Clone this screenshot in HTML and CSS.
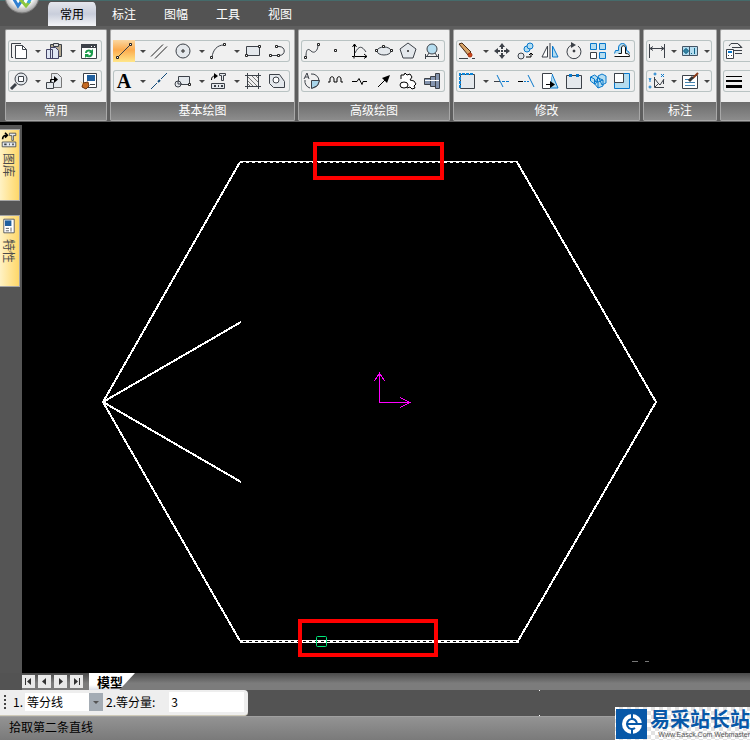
FILE: index.html
```html
<!DOCTYPE html>
<html lang="zh-CN">

<head>
    <meta charset="UTF-8">
    <meta name="viewport" content="width=device-width, initial-scale=1.0">
    <title>电子图板</title>
    <link rel="stylesheet" href="styles.css">
</head>

<body>
    <header class="titlebar">
        <button class="logo" aria-label="菜单">
            <svg width="36" height="36" viewBox="0 0 36 36">
                <defs>
                    <radialGradient id="ball" cx="50%" cy="40%" r="60%">
                        <stop offset="0.6" stop-color="#ffffff" />
                        <stop offset="1" stop-color="#9a9a9a" />
                    </radialGradient>
                </defs>
                <circle cx="18" cy="18" r="17" fill="url(#ball)" stroke="#777" />
                <path d="M8 18l6 10 5-7" fill="none" stroke="#2f7fd0" stroke-width="3" />
                <path d="M15 20l7 8 4-5" fill="none" stroke="#8cc63e" stroke-width="3" />
                <path d="M24 25l5-8" fill="none" stroke="#3aa6dd" stroke-width="3" />
            </svg>
        </button>
        <nav class="tabs">
            <button class="tab active">常用</button>
            <button class="tab">标注</button>
            <button class="tab">图幅</button>
            <button class="tab">工具</button>
            <button class="tab">视图</button>
        </nav>
    </header>

    <div class="ribbon">
        <!-- 常用 -->
        <section class="panel">
            <div class="groups">
                <div class="group">
                    <button class="tool" aria-label="复制"><svg viewBox="0 0 20 20"><path d="M4 16.500H2.500V2.500H12" /><path class="white" d="M6.500 4.500h7l4 4v9h-11z" /><path d="M13.500 4.500v4h4" /></svg></button>
                    <button class="drop" aria-label="更多"></button>
                    <button class="tool" aria-label="粘贴"><svg viewBox="0 0 20 20"><path fill="#b3a890" d="M6.500 3.500h11v12h-11z" /><path fill="#ddd" d="M9.500 2.500h5v3h-5z" /><path fill="#dfe6f4" stroke="#446" d="M2.500 8.500h6v9h-6zM6.500 6.500h5l3 3v8h-8z" /></svg></button>
                    <button class="drop" aria-label="更多"></button>
                    <button class="tool" aria-label="刷新"><svg viewBox="0 0 20 20"><path class="white" d="M2.500 3.500h15v14h-15z" /><path class="solid" stroke="none" d="M2 3h16v4H2z" /><path d="M12 5.500h1M15 5.500h1" stroke="#fff" /><path stroke="#1a9a4a" stroke-width="2" d="M7 12c0-3 4-3 6-1M13 12c0 4-4 4-6 2" /><path fill="#1a9a4a" stroke="none" d="M14 8v4h-4zM6 17v-4h4z" /></svg></button>
                </div>
                <div class="group">
                    <button class="tool" aria-label="缩放"><svg viewBox="0 0 20 20"><circle class="light" cx="12" cy="8" r="6" /><path class="white" d="M9.500 5.500h5v5h-5z" /><path stroke-width="3" d="M2 18l5-5" /></svg></button>
                    <button class="drop" aria-label="更多"></button>
                    <button class="tool" aria-label="插入块"><svg viewBox="0 0 20 20"><path class="light" stroke="#777" d="M7.500 2.500h6l4 4v10h-10z" /><path class="light" d="M2.500 11.500h7v6h-7z" /><path stroke="#000" d="M6.500 11V8.500H12" /><path fill="#000" stroke="none" d="M10 5l4 3.500-4 3.500z" /></svg></button>
                    <button class="drop" aria-label="更多"></button>
                    <button class="tool" aria-label="格式刷"><svg viewBox="0 0 20 20"><path class="white" d="M4.500 2.500h13v14h-13z" /><path fill="#1f5f9f" stroke="none" d="M8 4h8v6H8z" /><path d="M11 13.500h5" /><path fill="#c56a22" stroke="#6a3510" d="M4 12l5-1 1 4-3 3-4-2z" /><path fill="#e8c080" stroke="none" d="M1 10l3 2v2z" /></svg></button>
                </div>
            </div>
            <h2>常用</h2>
        </section>

        <!-- 基本绘图 -->
        <section class="panel">
            <div class="groups">
                <div class="group">
                    <button class="tool on" aria-label="直线"><svg viewBox="0 0 20 20"><path d="M4 16L16 4" /><path class="node" d="M2.500 15.500h2v2h-2zM15.500 2.500h2v2h-2z" /></svg></button>
                    <button class="drop" aria-label="更多"></button>
                    <button class="tool" aria-label="平行线"><svg viewBox="0 0 20 20"><path stroke="#222" d="M2 15.500L14 3.500M6 17.500L18 5.500" /></svg></button>
                    <button class="tool" aria-label="圆"><svg viewBox="0 0 20 20"><circle class="light" cx="10" cy="10" r="7" /><path class="node" d="M9 9h2v2H9z" /></svg></button>
                    <button class="drop" aria-label="更多"></button>
                    <button class="tool" aria-label="圆弧"><svg viewBox="0 0 20 20"><path d="M4 16C5 9 9 4 16 4" /><path class="node" d="M2.500 15.500h2v2h-2zM15.500 2.500h2v2h-2z" /></svg></button>
                    <button class="drop" aria-label="更多"></button>
                    <button class="tool" aria-label="矩形"><svg viewBox="0 0 20 20"><path class="light" d="M3.500 5.500h13v9h-13z" /><path class="node" d="M2.500 13.500h2v2h-2zM15.500 4.500h2v2h-2z" /></svg></button>
                    <button class="tool" aria-label="多段线"><svg viewBox="0 0 20 20"><path d="M3 14.500h9c7 0 7-9 0-9H9" /><path class="node" d="M2.500 13.500h2v2h-2zM10.500 13.500h2v2h-2zM8.500 4.500h2v2h-2z" /></svg></button>
                </div>
                <div class="group">
                    <button class="tool letter">A</button>
                    <button class="drop" aria-label="更多"></button>
                    <button class="tool" aria-label="中心线"><svg viewBox="0 0 20 20"><path stroke="#114a7a" d="M2 18l6-6M12 8l6-6" /><path stroke="#114a7a" d="M9 11l2-2" stroke-width="2" /></svg></button>
                    <button class="tool" aria-label="局部放大"><svg viewBox="0 0 20 20"><path class="light" d="M5.500 5.500h11v8h-11z" /><circle class="light" cx="5" cy="13" r="3" /><path d="M5 10v3h4" /><path class="node" d="M15.500 12.500h2v2h-2z" /></svg></button>
                    <button class="drop" aria-label="更多"></button>
                    <button class="tool" aria-label="图库"><svg viewBox="0 0 20 20"><path stroke="#000" d="M3.500 9c0-3 1-4 4-4" /><path fill="#000" stroke="none" d="M6 2l4 3-4 3z" /><path class="light" d="M11.500 2.500h6v2h-2v5h-2v-5h-2zM3.500 12.500h13v5h-13z" /><path d="M6 15h2M10 15h1M13 15h2" stroke-width="2" /></svg></button>
                    <button class="drop" aria-label="更多"></button>
                    <button class="tool" aria-label="剖面线"><svg viewBox="0 0 20 20"><path d="M2 4.500h16M2 15.500h16M4.500 2v16M15.500 2v16" /><path stroke="#777" d="M5 6l9 9M5 10l5 5M9 5l6 6M5 13l2 2M13 5l2 2" /></svg></button>
                    <button class="tool" aria-label="填充"><svg viewBox="0 0 20 20"><path class="light" d="M2.500 3.500h10l5 7v6h-11l-4-4z" /><circle class="white" cx="9" cy="9" r="3" /></svg></button>
                </div>
            </div>
            <h2>基本绘图</h2>
        </section>

        <!-- 高级绘图 -->
        <section class="panel">
            <div class="groups">
                <div class="group">
                    <button class="tool" aria-label="样条"><svg viewBox="0 0 20 20"><path d="M4 16C4 8 6 7 9 10S16 10 16 4" /><path class="node" d="M2.500 15.500h2v2h-2zM15.500 2.500h2v2h-2z" /></svg></button>
                    <button class="tool" aria-label="点"><svg viewBox="0 0 20 20"><path class="node" d="M8.500 8.500h2v2h-2z" /></svg></button>
                    <button class="tool" aria-label="公式曲线"><svg viewBox="0 0 20 20"><path stroke="#000" d="M4.500 3v12.500H17M2.500 6l2-3 2 3M14 13l3 2.500-3 2M2 15.500h2v2" /><path d="M5 12c4-8 7-7 11-1" /></svg></button>
                    <button class="tool" aria-label="椭圆"><svg viewBox="0 0 20 20"><ellipse class="light" cx="10" cy="10" rx="7" ry="4" /><path class="node" d="M1.500 8.500h2v2h-2zM16.500 8.500h2v2h-2zM8.500 4.500h2v2h-2z" /></svg></button>
                    <button class="tool" aria-label="正多边形"><svg viewBox="0 0 20 20"><path class="light" d="M10 2l8 6-3 9H5L2 8z" /><path class="node" d="M9.500 9.500h1v1h-1z" /></svg></button>
                    <button class="tool" aria-label="圆形阵列"><svg viewBox="0 0 20 20"><circle class="sky" cx="10" cy="8" r="5" /><path d="M3.500 13v5M16.500 13v5M4 15.500h12M7 12l-2 3M13 12l2 3" /></svg></button>
                </div>
                <div class="group">
                    <button class="tool" aria-label="局部放大图"><svg viewBox="0 0 20 20"><path d="M8 17A7 7 0 0 1 3 9M9 3a7 7 0 0 1 8 7 7 7 0 0 1-7 7M2 8l3-6 2 6M3 6h3" /><path fill="#a9d5ea" d="M9.500 9.500h8l-2 5-6 3z" /></svg></button>
                    <button class="tool" aria-label="波浪线"><svg viewBox="0 0 20 20"><path stroke="#000" d="M2 11h2V8c0-3 4-3 4 0v3h3V8c0-3 4-3 4 0v3h2" /></svg></button>
                    <button class="tool" aria-label="双折线"><svg viewBox="0 0 20 20"><path stroke="#000" d="M2 10.500h5l2-3 3 6 1-3h4" /></svg></button>
                    <button class="tool" aria-label="箭头"><svg viewBox="0 0 20 20"><path stroke="#000" d="M4 16L15 5" /><path fill="#000" stroke="none" d="M16 4l-3 8-5-5z" /></svg></button>
                    <button class="tool" aria-label="齿轮"><svg viewBox="0 0 20 20"><path class="white" stroke="#000" d="M3 8V4h3l1-2 2 2 3-1 2 3-2 3 4 1 2 3-2 2 1 2-3 1-2-2-3 1" /><ellipse class="white" stroke="#000" cx="6" cy="14" rx="4" ry="3" /></svg></button>
                    <button class="tool" aria-label="孔轴"><svg viewBox="0 0 20 20"><path class="metal" d="M2.500 7.500h6v6h-6zM8.500 5.500h5v10h-5zM13.500 2.500h4v15h-4z" /><path stroke="#fff" d="M3 9.500h14" /></svg></button>
                </div>
            </div>
            <h2>高级绘图</h2>
        </section>

        <!-- 修改 -->
        <section class="panel">
            <div class="groups">
                <div class="group">
                    <button class="tool" aria-label="删除"><svg viewBox="0 0 20 20"><path fill="#d8a468" stroke="#4a2a12" d="M2 3l3-1 9 9-3 3z" /><circle cx="13" cy="14" r="2" fill="#d24a18" stroke="#a33010" /><path d="M2 17.500h9M15 17.500h3" /></svg></button>
                    <button class="drop" aria-label="更多"></button>
                    <button class="tool" aria-label="平移"><svg viewBox="0 0 20 20"><path class="solid" stroke="none" d="M10 2l3 4H7zM10 18l3-4H7zM2 10l4-3v6zM18 10l-4-3v6zM9 9h2v2H9z" /><path d="M10 6v2M10 12v2M6 10h2M12 10h2" stroke-width="2" /></svg></button>
                    <button class="tool" aria-label="平移复制"><svg viewBox="0 0 20 20"><circle class="light" cx="5" cy="15" r="3" /><circle class="sky blue" cx="11" cy="8" r="3" /><circle class="sky blue" cx="14" cy="5" r="3" /><path stroke="#000" d="M10 16h5v-4M13 14l2-2 2 2" /></svg></button>
                    <button class="tool" aria-label="镜像"><svg viewBox="0 0 20 20"><path class="white" d="M7.500 5v11H2z" /><path class="sky blue" d="M12.500 5v11H18z" /><path d="M10 2v16" /></svg></button>
                    <button class="tool" aria-label="旋转"><svg viewBox="0 0 20 20"><path d="M14 5A7 7 0 1 1 8 4" /><path class="solid" stroke="none" d="M7 1l5 3-5 3z" /><circle cx="10" cy="10" r="1" fill="#000" /></svg></button>
                    <button class="tool" aria-label="阵列"><svg viewBox="0 0 20 20"><path class="sky blue" d="M2.500 2.500h6v6h-6zM11.500 2.500h6v6h-6zM11.500 11.500h6v6h-6z" /><path class="white" d="M2.500 11.500h6v6h-6z" /></svg></button>
                    <button class="tool" aria-label="等距线"><svg viewBox="0 0 20 20"><path class="sky blue" d="M2.500 12.500l1-3h3V7c0-6 8-6 8 0v2.500l2 1 1 2" /><path class="white" stroke="#111" d="M2.500 15.500h15c0-2-1-3-4-3V7c0-3-4-3-4 0v5.500h-3" /></svg></button>
                </div>
                <div class="group">
                    <button class="tool" aria-label="拉伸"><svg viewBox="0 0 20 20"><path class="light" d="M3.500 3.500h14v14h-14z" /><path stroke="#0a84d8" stroke-width="2" stroke-dasharray="3 1" d="M16 3H3v14" /></svg></button>
                    <button class="drop" aria-label="更多"></button>
                    <button class="tool" aria-label="裁剪"><svg viewBox="0 0 20 20"><path d="M2 10.500h6" /><path class="blue" d="M5 4l6 12" /><path class="blue" stroke-dasharray="3 1" d="M10 10.500h8" /></svg></button>
                    <button class="tool" aria-label="延伸"><svg viewBox="0 0 20 20"><path stroke="#000" d="M2 10.500h5" /><path class="blue" stroke-dasharray="2 1" d="M8 10.500h5" /><path class="blue" d="M12 4l6 12" /></svg></button>
                    <button class="tool" aria-label="缩放对象"><svg viewBox="0 0 20 20"><path class="sky blue" d="M12 3l6 14h-8z" /><path class="white" d="M12 2.500H2.500v15H10" /><path stroke="#000" d="M6 13.500h6" /><path fill="#000" stroke="none" d="M10 10l5 3.500-5 3.500z" /></svg></button>
                    <button class="tool" aria-label="打断"><svg viewBox="0 0 20 20"><path class="light" stroke="none" d="M3 5h14v12H3z" /><path d="M5 4.500H2.500v13h15v-13H15M8 4.500h4" /><path fill="#0878cc" stroke="none" d="M5 3h3v3H5zM12 3h3v3h-3z" /></svg></button>
                    <button class="tool" aria-label="分解"><svg viewBox="0 0 20 20"><path class="sky blue" d="M2.500 6l4-2 3 2v5l-3 2-4-3zM10 5l4-2 4 2v7l-4 2zM6 12l4-5 5 2v6l-5 2z" /><path class="blue" d="M2.500 6l4 2v5M10 11v6M10 11l5-2M10 11l-4-1" /></svg></button>
                    <button class="tool" aria-label="比例缩放"><svg viewBox="0 0 20 20"><path class="sky blue" d="M2.500 2.500h15v15h-15z" /><path class="white" d="M2.500 2.500h9v9h-9z" /></svg></button>
                </div>
            </div>
            <h2>修改</h2>
        </section>

        <!-- 标注 -->
        <section class="panel narrow">
            <div class="groups">
                <div class="group">
                    <button class="tool" aria-label="尺寸标注"><svg viewBox="0 0 20 20"><path d="M2.500 3v14M17.500 3v14M3 7.500h14M6 5.500l-3 2 3 2M14 5.500l3 2-3 2" /></svg></button>
                    <button class="drop" aria-label="更多"></button>
                    <button class="tool" aria-label="形位公差"><svg viewBox="0 0 20 20"><path class="sky" stroke="#456" d="M2.500 5.500h15v9h-15zM9.500 5.500v9" /><circle cx="6" cy="10" r="2" stroke="#168" /><path stroke="#168" d="M6 7v6M3 10h6M11 12.500h1M14.500 7v6" /></svg></button>
                    <button class="drop" aria-label="更多"></button>
                </div>
                <div class="group">
                    <button class="tool" aria-label="坐标标注"><svg viewBox="0 0 20 20"><path d="M7.500 6v10.500H17M8 8l3 4 2 2 4-6M8 16l4-4M16.500 9v4" /><path class="blue" d="M2 7l1 2 1-2M3 9v2M14 3l3 3M17 3l-3 3" /><circle class="blue" cx="8" cy="3" r="1" /><circle class="blue" cx="3" cy="16" r="1" /></svg></button>
                    <button class="drop" aria-label="更多"></button>
                    <button class="tool" aria-label="标注编辑"><svg viewBox="0 0 20 20"><path class="white" d="M2.500 4.500h15v13h-15z" /><path stroke="#4584b0" d="M5 8.500h5M5 11.500h10M5 14.500h10" /><path stroke="#8a3a18" stroke-width="2" d="M18 2l-5 5" /><path stroke="#333" stroke-width="3" d="M13 6l-4 4" /></svg></button>
                    <button class="drop" aria-label="更多"></button>
                </div>
            </div>
            <h2>标注</h2>
        </section>

        <!-- 特性 -->
        <section class="panel rest">
            <div class="groups">
                <div class="group">
                    <button class="tool" aria-label="图层"><svg viewBox="0 0 20 20"><path d="M5 5l2-2.500h7l4 4H8M10 9.500h8M11 12.500h7M14 3l3 3" /><path class="white" d="M2.500 8.500h7v9h-7z" /><path class="blue" stroke-width="2" d="M4 11h4" /><path d="M4 14.500h1M7 14.500h1" /></svg></button>
                    <button class="drop" aria-label="更多"></button>
                </div>
                <div class="group">
                    <button class="tool" aria-label="线宽"><svg viewBox="0 0 20 20"><path fill="#000" stroke="none" d="M2 5h16v1H2zM2 9h16v2H2zM2 14h16v3H2z" /></svg></button>
                    <button class="drop" aria-label="更多"></button>
                </div>
            </div>
            <h2></h2>
        </section>
    </div>

    <main class="workspace">
        <aside class="sidebar">
            <button class="sidetab">
                <svg viewBox="0 0 20 20"><path stroke="#000" stroke-width="2" d="M2 9c0-4 2-5 5-5M5 1l3 3-3 3" /><path class="light" d="M10.500 1.500h8v3h-3v6h-2v-6h-3zM1.500 12.500h17v6h-17z" /><path d="M4 15.500h3M10 15.500h1M14 15.500h2" stroke-width="2" /></svg>
                <span>图库</span>
            </button>
            <button class="sidetab">
                <svg viewBox="0 0 20 20"><path class="white" d="M3.500 1.500h13v17h-13z" /><path fill="#1f5f9f" stroke="none" d="M5 3h8v7H5z" /><path d="M6 13h4M6 16h4M12.500 12v5" /></svg>
                <span>特性</span>
            </button>
        </aside>
        <svg class="drawing" viewBox="22 122 728 550" preserveAspectRatio="xMidYMin">
            <g class="shape">
                <path d="M240 162L103 402L240 641" />
                <path d="M517 162L656 402L518 641" />
                <path d="M241 322L103 402L241 482" />
            </g>
            <!-- picked edges are dashed -->
            <path class="edge" d="M240 161.500H518M240 640.500H519M240 642.500H519" />
            <path class="edge dashed" d="M240 162.500H518M240 641.500H519" />
            <path class="axis" d="M379.500 373V402.500H410M374.500 381l5-8 5 8M400 397.500l10 5-10 5" />
            <rect class="mark" x="315" y="144" width="127" height="34" />
            <rect class="mark" x="300" y="621" width="136" height="34" />
            <rect class="pick" x="316.500" y="636.500" width="10" height="10" rx="1" />
            <path class="hint" d="M632 661.500h6M645 661.500h4" />
        </svg>
    </main>

    <div class="sheets">
        <button class="nav" aria-label="第一页"><svg viewBox="0 0 13 13"><path d="M3 3h1v7H3zM9 3v7L5 6.500z" /></svg></button>
        <button class="nav" aria-label="上一页"><svg viewBox="0 0 13 13"><path d="M8 3v7L4 6.500z" /></svg></button>
        <button class="nav" aria-label="下一页"><svg viewBox="0 0 13 13"><path d="M5 3v7l4-3.500z" /></svg></button>
        <button class="nav" aria-label="最后一页"><svg viewBox="0 0 13 13"><path d="M9 3h1v7H9zM4 3v7l4-3.500z" /></svg></button>
        <button class="sheet">模型</button>
    </div>

    <div class="commands">
        <form class="options">
            <span class="grip"></span>
            <label for="mode">1.</label>
            <span class="combo">
                <select id="mode">
                    <option>等分线</option>
                </select>
            </span>
            <label for="count">2.等分量:</label>
            <input id="count" type="text" value="3">
        </form>
        <div class="empty"></div>
    </div>

    <footer class="status">拾取第二条直线</footer>

    <a class="watermark" href="#">
        <svg width="31" height="30" viewBox="0 0 31 30">
            <path fill="#0758a8" d="M0 0h31v30H0z" />
            <circle cx="16" cy="15" r="10" fill="#fff" />
            <g fill="none" stroke="#0758a8" stroke-width="2">
                <path d="M16 4v6M16 20v6M11 15h16" />
                <path d="M21 15a5 5 0 1 0-2 4" />
            </g>
        </svg>
        <span class="brand">
            <b>易采站长站</b>
            <small>Www.Easck.Com Webmaster</small>
        </span>
    </a>
</body>

</html>
```
FILE: styles.css
```css
* {
    box-sizing: border-box;
}

body {
    margin: 0;
    min-height: 100vh;
    display: flex;
    flex-direction: column;
    position: relative;
    overflow-x: hidden;
    background: #000;
    color: #000;
    font: 12px/16px "Noto Sans CJK SC", sans-serif;
}

button {
    margin: 0;
    padding: 0;
    border: 0;
    background: none;
    font: inherit;
    color: inherit;
    cursor: pointer;
}

h2 {
    margin: 0;
    font: inherit;
}

/* title bar */
.titlebar {
    height: 26px;
    padding-left: 46px;
    background: #535353;
    border-top: 1px solid #456b6b;
}

.logo {
    position: absolute;
    left: 4px;
    top: -22px;
    height: 36px;
}

.tabs {
    display: flex;
    height: 25px;
    padding-top: 1px;
}

.tab {
    width: 52px;
    color: #fff;
}

.tab.active {
    color: #000;
    border: 2px solid #535353;
    border-width: 0 2px;
    border-radius: 5px 5px 0 0;
    background: linear-gradient(#e4e6ec, #c9cedb 50%, #f4f5f8) padding-box;
}

/* ribbon */
.ribbon {
    display: flex;
    gap: 3px;
    padding: 3px 0 1px 5px;
    background: #5e5e5e;
    border-left: 1px solid #000;
    margin-left: -1px;
    overflow: hidden;
}

.panel {
    flex: none;
    border: 1px solid #a8a8a8;
    border-top-color: #8c8c8c;
    border-radius: 2px;
    background: #f0f0f0;
}

.rest {
    flex: 1;
}

.groups {
    display: flex;
    flex-direction: column;
    gap: 8px;
    padding: 10px 4px 10px 2px;
}

.group {
    display: flex;
    height: 22px;
    border-radius: 3px;
    box-shadow: inset 0 0 0 1px #b9c3c3;
}

.tool {
    width: 24px;
    height: 22px;
    padding: 1px 3px 1px 1px;
}

.narrow .tool {
    width: 22px;
    padding-right: 1px;
}

.tool svg {
    display: block;
    width: 20px;
    height: 20px;
}

.tool.on {
    background: linear-gradient(#fbd7a0, #fcab4e 45%, #ffe68a) 0 0 / 22px 100% no-repeat;
}

.letter {
    font: bold 20px/20px "Liberation Serif", serif;
}

.drop {
    width: 11px;
    display: flex;
    align-items: center;
    justify-content: center;
}

.drop::before {
    content: "";
    border: 3px solid transparent;
    border-top-color: #444;
    border-bottom: 0;
}

.panel h2 {
    height: 18px;
    line-height: 16px;
    text-align: center;
    color: #fff;
    background: linear-gradient(#6c6c6c, #8c8c8c);
}

/* icons */
.tool svg,
.sidetab svg {
    fill: none;
    stroke: #3c4148;
}

.white {
    fill: #fff;
}

.light {
    fill: #e4e8ec;
}

.sky {
    fill: #b5ddf0;
}

.metal {
    fill: #8494ae;
}

.solid {
    fill: #3c4148;
}

.blue {
    stroke: #0878cc;
}

.node {
    fill: #fff;
    stroke: #222;
}

/* drawing area */
.workspace {
    flex: 1;
    display: flex;
}

.sidebar {
    flex: none;
    width: 22px;
    margin-top: 3px;
    padding-top: 4px;
    display: flex;
    flex-direction: column;
    gap: 14px;
    background: #555;
}

.sidetab {
    width: 20px;
    height: 72px;
    padding: 2px 2px 0 0;
    display: flex;
    flex-direction: column;
    align-items: center;
    gap: 5px;
    color: #4c4c4c;
    border: 1px solid #a5a5a5;
    border-left: 0;
    background: linear-gradient(90deg, #fff2c4, #ffd768);
}

.sidetab svg {
    width: 16px;
    height: 16px;
}

.sidetab span {
    writing-mode: vertical-rl;
    text-orientation: sideways;
}

.drawing {
    flex: 1;
    min-width: 0;
    width: 100%;
    fill: none;
}

.shape {
    stroke: #fff;
    stroke-width: 2;
    shape-rendering: crispEdges;
}

.edge {
    stroke: #fff;
    shape-rendering: crispEdges;
}

.dashed {
    stroke-dasharray: 3 3;
}

.axis {
    stroke: #f0f;
    shape-rendering: crispEdges;
}

.mark {
    stroke: #f00;
    stroke-width: 4;
}

.pick {
    stroke: #00e87a;
}

.hint {
    stroke: #777;
}

/* sheet tabs */
.sheets {
    display: flex;
    align-items: center;
    gap: 3px;
    height: 17px;
    padding-left: 22px;
    background: linear-gradient(90deg, #535353 22px, transparent 22px), linear-gradient(#4a4a4a, #7c7c7c 60%);
}

.nav {
    width: 13px;
    height: 13px;
    background: #e9e9e9;
}

.nav svg {
    display: block;
    fill: #333;
}

.sheet {
    align-self: stretch;
    width: 46px;
    margin-left: 3px;
    padding-right: 4px;
    font-weight: bold;
    font-size: 13px;
    background: linear-gradient(#fff 70%, #dcdfe8);
    clip-path: polygon(0 0, 100% 0, 66% 100%, 0 100%);
}

/* command options */
.commands {
    display: flex;
    height: 26px;
    background: #535353;
}

.options {
    display: flex;
    align-items: center;
    padding: 0 4px 2px 3px;
    background: #eee;
    border-bottom: 1px solid #cfcab8;
    border-radius: 0 4px 4px 0;
}

.grip {
    width: 4px;
    height: 16px;
    margin-right: 6px;
    background: radial-gradient(circle, #444 1px, transparent 1px) 0 0 / 4px 4px;
}

.combo {
    display: flex;
    margin: 0 3px 0 2px;
    position: relative;
    background: #a4acb4;
}

.combo::after {
    content: "";
    position: absolute;
    right: 4px;
    top: 8px;
    border: 3px solid transparent;
    border-top-color: #555;
    border-bottom: 0;
    pointer-events: none;
}

.options select,
.options input {
    height: 20px;
    margin: 0;
    padding: 0 2px;
    border: 0;
    border-radius: 0;
    background: #fff;
    color: #000;
    font: inherit;
    appearance: none;
}

.options select {
    width: 78px;
    height: 18px;
    background: linear-gradient(90deg, #fff 64px, #a4acb4 64px);
}

.options input {
    width: 75px;
    margin-left: 14px;
}

.empty {
    width: 292px;
    background: linear-gradient(#fff, #fff) 100% 0 / 1px 1px no-repeat, linear-gradient(#fff, #fff) 100% 100% / 1px 1px no-repeat;
}

/* status bar */
.status {
    height: 24px;
    padding: 2px 9px;
    background: linear-gradient(#939393, #7a7a7a);
    border-top: 1px solid #a0a0a0;
}

.watermark {
    position: absolute;
    right: 0;
    bottom: 0;
    display: flex;
    gap: 3px;
    padding: 2px 0 1px 1px;
    color: #0758a8;
    text-decoration: none;
    background: repeating-conic-gradient(#e2e2e2 0 25%, #fff 0 50%) 0 0 / 8px 8px;
}

.brand {
    display: flex;
    flex-direction: column;
}

.brand b {
    font: bold 20px/22px "Liberation Sans", "Noto Sans CJK SC", sans-serif;
}

.brand small {
    font: 7px/8px "Liberation Sans", sans-serif;
    color: #555;
    text-align: right;
}
```
